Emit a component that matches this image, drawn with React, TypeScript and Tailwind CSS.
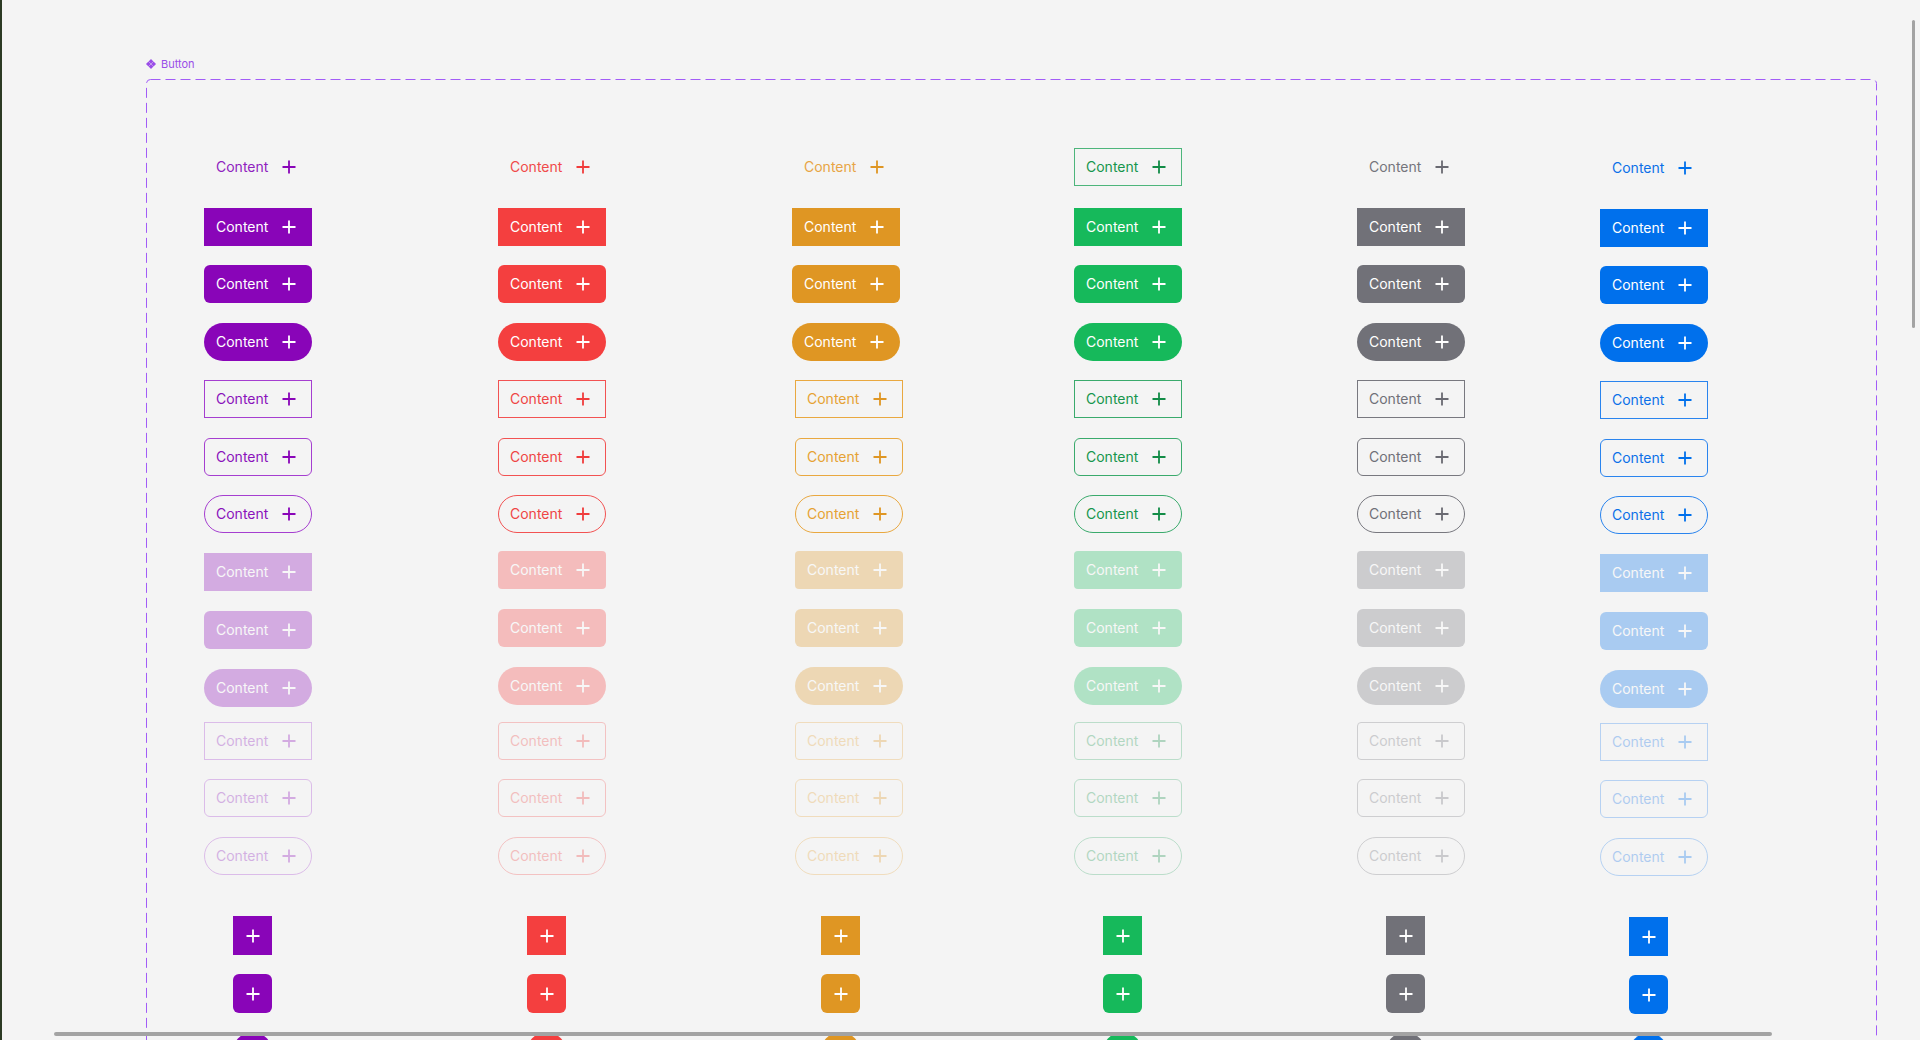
import React from 'react'

type Col = {
  name: string
  width: string
  fill: string
  text: string
  icon: string
  border: string
  ghost: string
  ghostBox?: string
  alt: boolean
  shift: string
  top: string
}

const cols: Col[] = [
  {
    name: 'purple',
    width: 'w-[294px]',
    fill: 'bg-[#8905b8]',
    text: 'text-[#8a12bb]',
    icon: 'text-[#8905b8]',
    border: 'border-[#a53ed0]',
    ghost: 'text-[#8f22bf]',
    alt: true,
    shift: '',
    top: 'pt-[69px]',
  },
  {
    name: 'red',
    width: 'w-[294px]',
    fill: 'bg-[#f43f3f]',
    text: 'text-[#ef4545]',
    icon: 'text-[#f03c3c]',
    border: 'border-[#f25252]',
    ghost: 'text-[#f04a4a]',
    alt: false,
    shift: '',
    top: 'pt-[69px]',
  },
  {
    name: 'orange',
    width: 'w-[282px]',
    fill: 'bg-[#df9623]',
    text: 'text-[#e6a233]',
    icon: 'text-[#df9623]',
    border: 'border-[#e9a840]',
    ghost: 'text-[#e8a545]',
    alt: false,
    shift: 'ml-[3px]',
    top: 'pt-[69px]',
  },
  {
    name: 'green',
    width: 'w-[283px]',
    fill: 'bg-[#16b95b]',
    text: 'text-[#16964d]',
    icon: 'text-[#128c47]',
    border: 'border-[#3aaa6c]',
    ghost: 'text-[#16964d]',
    ghostBox: 'border border-[#4db57b]',
    alt: false,
    shift: '',
    top: 'pt-[69px]',
  },
  {
    name: 'gray',
    width: 'w-[243px]',
    fill: 'bg-[#717178]',
    text: 'text-[#707078]',
    icon: 'text-[#6a6a72]',
    border: 'border-[#78787f]',
    ghost: 'text-[#75757c]',
    alt: false,
    shift: '',
    top: 'pt-[69px]',
  },
  {
    name: 'blue',
    width: 'w-[260px]',
    fill: 'bg-[#0070ec]',
    text: 'text-[#0b70e8]',
    icon: 'text-[#0070ec]',
    border: 'border-[#2a84ee]',
    ghost: 'text-[#0b70e8]',
    alt: true,
    shift: '',
    top: 'pt-[70px]',
  },
]

type Row = {
  v: 'ghost' | 'fill' | 'outline'
  s: 'none' | 'sm' | 'md' | 'full'
  dis?: boolean
  mt: string
  mtAlt?: string
}

const rows: Row[] = [
  { v: 'ghost', s: 'none', mt: 'mt-0' },
  { v: 'fill', s: 'none', mt: 'mt-[22px]' },
  { v: 'fill', s: 'md', mt: 'mt-[19px]' },
  { v: 'fill', s: 'full', mt: 'mt-[20px]' },
  { v: 'outline', s: 'none', mt: 'mt-[19px]' },
  { v: 'outline', s: 'md', mt: 'mt-[20px]' },
  { v: 'outline', s: 'full', mt: 'mt-[19px]' },
  { v: 'fill', s: 'sm', dis: true, mt: 'mt-[18px]', mtAlt: 'mt-[20px]' },
  { v: 'fill', s: 'md', dis: true, mt: 'mt-[20px]' },
  { v: 'fill', s: 'full', dis: true, mt: 'mt-[20px]' },
  { v: 'outline', s: 'sm', dis: true, mt: 'mt-[17px]', mtAlt: 'mt-[15px]' },
  { v: 'outline', s: 'md', dis: true, mt: 'mt-[19px]' },
  { v: 'outline', s: 'full', dis: true, mt: 'mt-[20px]' },
]

function Plus({ className = '' }: { className?: string }) {
  return (
    <svg className={className} width="14" height="14" viewBox="0 0 14 14" fill="none">
      <path d="M7 0.5v13M0.5 7h13" stroke="currentColor" strokeWidth="1.8" />
    </svg>
  )
}

function shapeClass(s: Row['s'], alt: boolean) {
  if (s === 'md') return 'rounded-[6px]'
  if (s === 'full') return 'rounded-full'
  if (s === 'sm') return alt ? 'rounded-none' : 'rounded-[4px]'
  return 'rounded-none'
}

function Btn({ c, row, index }: { c: Col; row: Row; index: number }) {
  const base = 'flex h-[38px] w-[108px] shrink-0 items-center justify-between text-[14px] leading-none'
  const mt = c.alt && row.mtAlt ? row.mtAlt : row.mt
  const shift = index >= 4 ? c.shift : ''
  let look = ''
  let iconColor = 'text-white'
  if (row.v === 'fill') {
    look = `${c.fill} text-white pl-3 pr-4`
  } else if (row.v === 'outline') {
    look = `border ${c.border} ${c.text} pl-[11px] pr-[15px]`
    iconColor = c.icon
  } else {
    look = c.ghostBox ? `${c.ghostBox} ${c.ghost} pl-[11px] pr-[15px]` : `${c.ghost} pl-3 pr-4`
    iconColor = c.icon
  }
  return (
    <div className={`${base} ${mt} ${shift} ${look} ${shapeClass(row.s, c.alt)} ${row.dis ? 'opacity-30' : ''}`}>
      <span>Content</span>
      <Plus className={iconColor} />
    </div>
  )
}

function ComponentIcon() {
  return (
    <svg width="10" height="10" viewBox="0 0 10 10" fill="currentColor">
      <path d="M5 0L7.4 2.4L5 4.8L2.6 2.4Z" />
      <path d="M2.4 2.6L4.8 5L2.4 7.4L0 5Z" />
      <path d="M7.6 2.6L10 5L7.6 7.4L5.2 5Z" />
      <path d="M5 5.2L7.4 7.6L5 10L2.6 7.6Z" />
    </svg>
  )
}

export default function App() {
  return (
    <div
      className="relative flex h-[1040px] w-full overflow-hidden bg-[#f4f4f4]"
      style={{ fontFamily: 'Inter, "Noto Sans", sans-serif' }}
    >
      <div className="w-[2px] shrink-0 bg-[#2c3a24]" />

      <div className="flex flex-col pl-[144px] pt-[59px]">
        <div className="flex h-[10px] items-center gap-[5px] text-[11px] leading-none text-[#9a4de8]">
          <ComponentIcon />
          <span>Button</span>
        </div>

        <div className="relative mt-[10px] h-[1120px] w-[1731px] shrink-0">
          {/* dashed component-set border */}
          <svg className="pointer-events-none absolute inset-0" width="1731" height="1120">
            <rect
              x="0.5"
              y="0.5"
              width="1730"
              height="1119"
              rx="4"
              fill="none"
              stroke="#a25cf7"
              strokeDasharray="10 5"
            />
          </svg>

          <div className="flex pl-[58px]">
            {cols.map((c) => (
              <div key={c.name} className={`flex shrink-0 flex-col items-start ${c.width} ${c.top}`}>
                {rows.map((r, i) => (
                  <Btn key={i} c={c} row={r} index={i} />
                ))}
                <div className={`ml-[29px] mt-[41px] flex h-[39px] w-[39px] items-center justify-center ${c.fill} text-white`}>
                  <Plus />
                </div>
                <div className={`ml-[29px] mt-[19px] flex h-[39px] w-[39px] items-center justify-center rounded-[6px] ${c.fill} text-white`}>
                  <Plus />
                </div>
                <div className={`ml-[29px] mt-[19px] flex h-[39px] w-[39px] items-center justify-center rounded-full ${c.fill} text-white`}>
                  <Plus />
                </div>
              </div>
            ))}
          </div>
        </div>
      </div>

      {/* canvas scrollbars */}
      <div className="absolute right-[5px] top-[20px] h-[308px] w-[3px] rounded-full bg-[#a3a3a3]" />
      <div className="absolute left-[54px] top-[1032px] h-[4px] w-[1718px] rounded-full bg-[#a3a3a3]" />
    </div>
  )
}
